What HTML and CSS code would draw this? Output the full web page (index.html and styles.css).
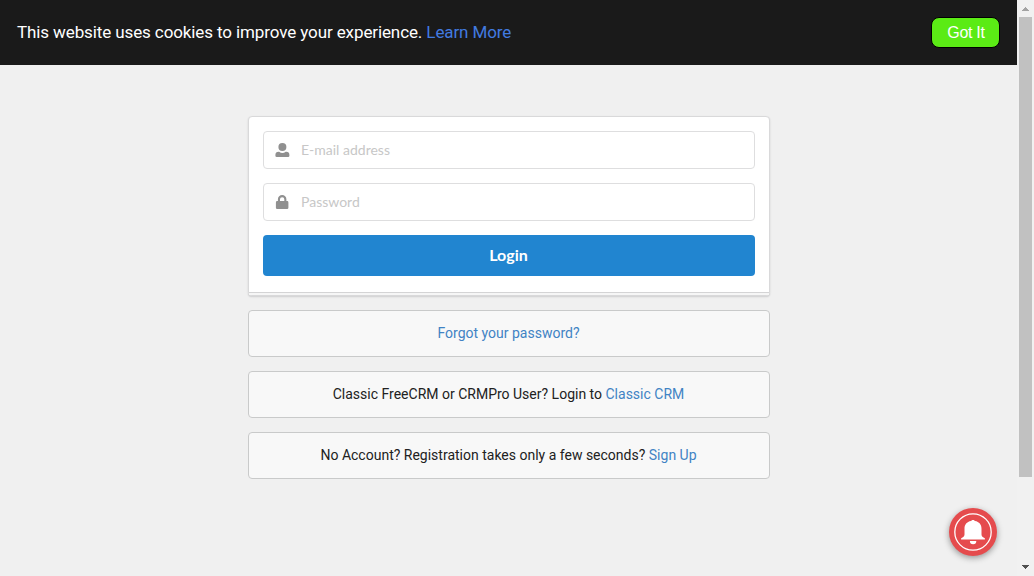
FILE: index.html
```html
<!DOCTYPE html>
<html lang="en">
<head>
<meta charset="utf-8">
<title>Login</title>
<link rel="stylesheet" href="styles.css">
</head>
<body>
<div class="page">
  <header class="cookie-bar">
    <p class="cookie-text">This website uses cookies to improve your experience. <a href="#">Learn More</a></p>
    <button class="cookie-accept" type="button">Got It</button>
  </header>
  <main class="column">
    <form class="login-card">
      <label class="field">
        <svg class="field-icon" viewBox="-.4 0 14 14"><circle cx="7" cy="4" r="4"/><path d="M0 12.700V12a3.200 3.200 0 0 1 3.200-3.200h.5a5.500 5.500 0 0 0 6.600 0h.5A3.200 3.200 0 0 1 14 12v.7a1.300 1.300 0 0 1-1.300 1.300H1.300A1.300 1.300 0 0 1 0 12.700z"/></svg>
        <input type="text" placeholder="E-mail address">
      </label>
      <label class="field">
        <svg class="field-icon" viewBox="-.4 0 14 14"><path fill-rule="evenodd" d="M11.600 6.100H11V4.300a4 4 0 0 0-8.500 0v1.800h-.7A1.300 1.300 0 0 0 .5 7.400v5.300A1.300 1.300 0 0 0 1.800 14h9.900a1.300 1.300 0 0 0 1.300-1.300V7.400a1.300 1.300 0 0 0-1.400-1.300zM8.900 6.100H4.600V4.300a2.150 2.150 0 0 1 4.300 0z"/></svg>
        <input type="password" placeholder="Password">
      </label>
      <button class="login-button" type="button">Login</button>
    </form>
    <div class="message"><a href="#">Forgot your password?</a></div>
    <div class="message">Classic FreeCRM or CRMPro User? Login to <a href="#">Classic CRM</a></div>
    <div class="message">No Account? Registration takes only a few seconds? <a href="#">Sign Up</a></div>
  </main>
</div>
<div class="scrollbar">
  <svg class="arrow" viewBox="0 0 17 17"><path fill="#a3a3a3" d="M5 11h7L8.500 7z"/></svg>
  <div class="thumb"></div>
  <svg class="arrow arrow-down" viewBox="0 0 17 17"><path fill="#505050" d="M5 6h7l-3.500 4z"/></svg>
</div>
<div class="bell">
  <svg viewBox="0 0 48 48"><circle cx="24" cy="24" r="18.200" fill="none" stroke="#fff" stroke-width="1.300"/><path fill="#fff" d="M24 11.900c1.100 0 1.800.6 2 1.200 4.200.7 6.500 3.600 6.500 7.700v5.700c0 1.600.9 2.600 2.900 3.500.9.400.8 1.600-.2 1.600H12.800c-1 0-1.100-1.200-.2-1.600 2-.9 2.900-1.900 2.900-3.500v-5.700c0-4.100 2.300-7 6.500-7.700.2-.6.900-1.200 2-1.200zM20.900 33h6.400a3.200 3.200 0 0 1-6.400 0z"/></svg>
</div>
</body>
</html>
```

FILE: styles.css
```css
*, ::before, ::after { box-sizing: border-box; }
body {
  margin: 0;
  height: 576px;
  display: flex;
  overflow: hidden;
  background: #f0f0f0;
  font-family: Roboto, sans-serif;
  font-size: 14px;
}
a { color: #4183c4; text-decoration: none; }
.page { width: 1017px; }
.cookie-bar {
  height: 65px;
  padding: 0 17px;
  display: flex;
  align-items: center;
  justify-content: space-between;
  background: #1a1a1a;
  color: #fff;
}
.cookie-text { margin: 0; padding-bottom: 2px; font-size: 17px; line-height: 24px; letter-spacing: -.108px; }
.cookie-text a { color: #427be0; }
.cookie-accept {
  width: 69px;
  height: 31px;
  padding: 0 0 0 1px;
  border: 1px solid #000;
  border-radius: 8px;
  background: #5beb15;
  color: #fff;
  font: 16px "Liberation Sans", sans-serif;
  letter-spacing: -.3px;
}
.column {
  width: 522px;
  margin: 51px auto 0 248px;
  display: flex;
  flex-direction: column;
  gap: 14px;
}
.login-card {
  position: relative;
  height: 180px;
  padding: 14px;
  border: 1px solid #d9d9da;
  border-radius: 4px;
  background: #fff;
  box-shadow: 0 1px 0 #d6d6d7, 0 1px 2px rgba(34, 36, 38, .15);
  display: flex;
  flex-direction: column;
  gap: 14px;
}
.login-card::after {
  content: "";
  position: absolute;
  left: 0;
  right: 0;
  bottom: 0;
  height: 3px;
  border-top: 1px solid #d4d4d5;
  background: #f6f6f6;
}
.field {
  height: 38px;
  padding: 0 11px;
  display: flex;
  align-items: center;
  gap: 12px;
  border: 1px solid #dededf;
  border-radius: 4px;
}
.field-icon { width: 14px; height: 14px; flex: none; overflow: visible; fill: #909090; }
.field input {
  flex: 1;
  padding: 0 0 2px;
  border: 0;
  outline: 0;
  font: 14px/17px Lato, sans-serif;
}
.field input::placeholder { color: #c7c7c7; }
.login-button {
  height: 41px;
  flex: none;
  padding: 0 1px 2px 0;
  border: 0;
  border-radius: 4px;
  background: #2185d0;
  color: #fff;
  font: 700 16px/16px Lato, sans-serif;
}
.message {
  height: 47px;
  padding-right: 1px;
  border: 1px solid #c9caca;
  border-radius: 4px;
  background: #f8f8f8;
  color: #212121;
  line-height: 45px;
  text-align: center;
}
.scrollbar {
  width: 17px;
  height: 576px;
  display: flex;
  flex-direction: column;
  align-items: center;
  background: #f1f1f1;
}
.arrow { width: 17px; height: 17px; flex: none; shape-rendering: crispEdges; }
.arrow-down { margin-top: auto; }
.thumb { width: 13px; height: 460px; background: #c1c1c1; }
.bell {
  position: fixed;
  left: 949px;
  top: 508px;
  width: 48px;
  height: 48px;
  border-radius: 50%;
  background: #e54b4d;
  box-shadow: 0 2px 6px rgba(0, 0, 0, .38);
}
.bell svg { display: block; width: 48px; height: 48px; }
```
